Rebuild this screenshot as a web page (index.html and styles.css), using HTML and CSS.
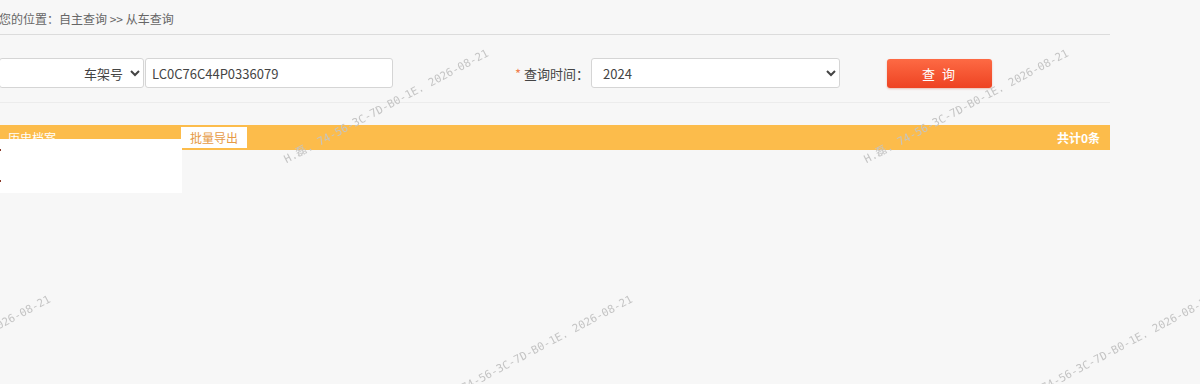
FILE: index.html
```html
<!DOCTYPE html>
<html lang="zh-CN">
<head>
  <meta charset="UTF-8">
  <title>从车查询</title>
  <link rel="stylesheet" href="styles.css">
</head>
<body>
  <div class="page">
    <div class="crumb">您的位置：自主查询 &gt;&gt; 从车查询</div>

    <div class="search">
      <select class="type-select">
        <option>车架号</option>
      </select>
      <input type="text" class="vin" value="LC0C76C44P0336079">
      <label class="time-label"><span class="req">*</span> 查询时间：</label>
      <select class="year-select">
        <option>2024</option>
      </select>
      <button class="btn-search">查 询</button>
    </div>

    <div class="panel-head">
      <span class="panel-title">历史档案</span>
      <button class="btn-export">批量导出</button>
      <span class="total">共计0条</span>
    </div>
  </div>

  <!-- 弹出层 -->
  <div class="popup">
    <i class="dot dot-a"></i>
    <i class="dot dot-b"></i>
  </div>

  <!-- 水印 -->
  <div class="wm-layer">
    <div class="wm wm1">H.磊. 74-56-3C-7D-B0-1E. 2026-08-21</div>
    <div class="wm wm2">H.磊. 74-56-3C-7D-B0-1E. 2026-08-21</div>
    <div class="wm wm3">H.磊. 74-56-3C-7D-B0-1E. 2026-08-21</div>
    <div class="wm wm4">H.磊. 74-56-3C-7D-B0-1E. 2026-08-21</div>
    <div class="wm wm5">H.磊. 74-56-3C-7D-B0-1E. 2026-08-21</div>
  </div>
</body>
</html>
```

FILE: styles.css
```css
html, body {
  margin: 0;
  padding: 0;
  background: #f7f7f7;
  font-family: "Noto Sans CJK SC", "Liberation Sans", sans-serif;
  color: #333;
  overflow: hidden;
}

.page {
  width: 1110px;
}

.crumb {
  height: 34px;
  line-height: 38px;
  font-size: 12px;
  color: #666;
  border-bottom: 1px solid #dcdcdc;
  margin-left: -1px;
}

.search {
  display: flex;
  align-items: center;
  padding: 23px 0 14px;
  border-bottom: 1px solid #ececec;
}

.search select,
.search input {
  box-sizing: border-box;
  height: 30px;
  border: 1px solid #d5d5d5;
  border-radius: 3px;
  background: #fff;
  font-family: "Noto Sans CJK SC", "Liberation Sans", sans-serif;
  font-size: 13px;
  color: #444;
  outline: none;
}

.type-select {
  width: 145px;
  margin-left: -1px;
  text-align-last: right;
  padding: 0 4px;
}

.vin {
  width: 248px;
  margin-left: 1px;
  padding: 0 6px;
}

.time-label {
  margin-left: 122px;
  font-size: 13px;
  color: #444;
}

.req {
  color: #f08050;
}

.year-select {
  width: 249px;
  margin-left: 2px;
  padding: 0 7px;
}

.btn-search {
  width: 105px;
  height: 29px;
  margin-left: 47px;
  border: none;
  border-radius: 3px;
  background: linear-gradient(#fd6a44, #ee4322);
  color: #fff;
  font-family: "Noto Sans CJK SC", sans-serif;
  font-size: 13px;
  letter-spacing: 2px;
  box-shadow: 0 1px 2px rgba(200, 60, 20, 0.3);
}

.panel-head {
  display: flex;
  align-items: center;
  height: 25px;
  margin-top: 22px;
  background: #fcbc4b;
  color: #fff;
  font-size: 12px;
}

.panel-title {
  width: 173px;
  padding-left: 8px;
}

.btn-export {
  height: 21px;
  width: 66px;
  padding: 0;
  border: none;
  background: #fff;
  color: #e69a45;
  font-family: "Noto Sans CJK SC", sans-serif;
  font-size: 12px;
}

.total {
  margin-left: auto;
  padding-right: 10px;
  font-weight: bold;
}

.popup {
  position: absolute;
  left: 0;
  top: 139px;
  width: 182px;
  height: 54px;
  background: #fff;
}

.dot {
  position: absolute;
  left: -1px;
  width: 2px;
  height: 2px;
  background: #8a3a2a;
}
.dot-a { top: 10px; }
.dot-b { top: 41px; }

.wm-layer {
  position: fixed;
  left: 0;
  top: 0;
  right: 0;
  bottom: 0;
  overflow: hidden;
  pointer-events: none;
}

.wm {
  position: absolute;
  font-family: "DejaVu Sans Mono", "Liberation Mono", monospace;
  font-size: 11px;
  color: #c4c4c4;
  white-space: nowrap;
  transform: rotate(-28deg);
  transform-origin: left bottom;
}

.wm1 { left: 288px; top: 150px; }
.wm2 { left: 868px; top: 150px; }
.wm3 { left: -150px; top: 396px; }
.wm4 { left: 432px; top: 396px; }
.wm5 { left: 1012px; top: 396px; }
```
